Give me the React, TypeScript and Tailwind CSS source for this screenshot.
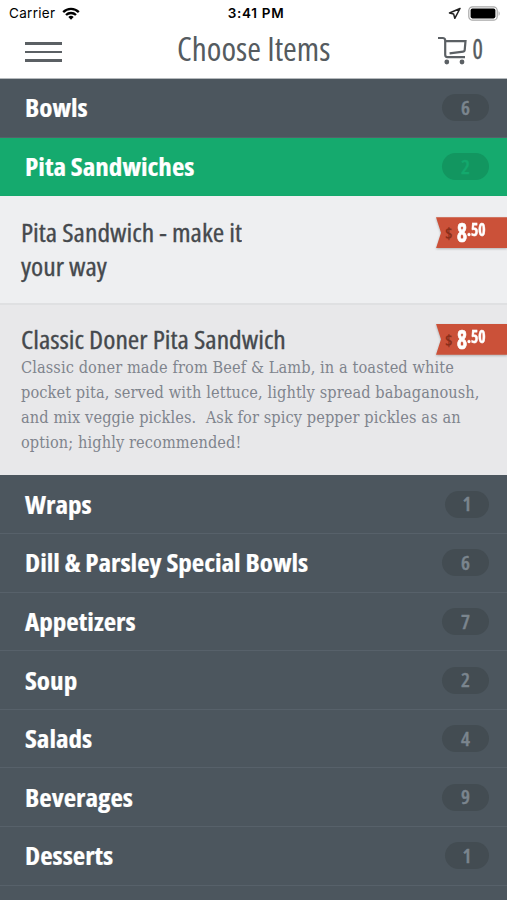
import clsx from 'clsx';

type Item = {
  name: string;
  price: string;
  cents: string;
  description?: string;
};

type Category = {
  name: string;
  count: number;
  items?: Item[];
};

const categories: Category[] = [
  { name: 'Bowls', count: 6 },
  {
    name: 'Pita Sandwiches',
    count: 2,
    items: [
      { name: 'Pita Sandwich - make it your way', price: '8', cents: '.50' },
      {
        name: 'Classic Doner Pita Sandwich',
        price: '8',
        cents: '.50',
        description:
          'Classic doner made from Beef & Lamb, in a toasted white pocket pita, served with lettuce, lightly spread babaganoush, and mix veggie pickles.\u00a0 Ask for spicy pepper pickles as an option; highly recommended!'
      }
    ]
  },
  { name: 'Wraps', count: 1 },
  { name: 'Dill & Parsley Special Bowls', count: 6 },
  { name: 'Appetizers', count: 7 },
  { name: 'Soup', count: 2 },
  { name: 'Salads', count: 4 },
  { name: 'Beverages', count: 9 },
  { name: 'Desserts', count: 1 }
];

function StatusBar() {
  return (
    <div className="grid h-[27px] grid-cols-3 items-center pl-[9px] pr-[6px] font-[Inter,sans-serif] text-[13.5px] leading-none text-black">
      <div className="flex items-center gap-[7px]">
        <span className="pt-px tracking-[0.3px]">Carrier</span>
        <svg width="18" height="13" viewBox="0 0 18 13" fill="none" stroke="#000" strokeWidth="2.3">
          <path d="M1.2 5.1a11 11 0 0 1 15.6 0" />
          <path d="M4 8a7.2 7.2 0 0 1 10 0" />
          <path d="M9 12.8 6.3 10a3.9 3.9 0 0 1 5.4 0z" fill="#000" stroke="none" />
        </svg>
      </div>
      <span className="pl-[2px] pt-px text-center font-semibold tracking-[0.7px]">3:41 PM</span>
      <div className="flex items-center justify-end gap-[7px]">
        <svg width="13" height="13" viewBox="0 0 13 13" fill="none" stroke="#222" strokeWidth="1.5" strokeLinejoin="round">
          <path d="M12 1.5 1.5 6l4.1.9L6.8 11.3z" />
        </svg>
        <svg width="33" height="15" viewBox="0 0 33 15">
          <rect x="0.8" y="0.8" width="28.4" height="13.4" rx="3.8" fill="#fff" stroke="#a8a8a8" strokeWidth="1.2" />
          <rect x="2.6" y="2.6" width="24.8" height="9.8" rx="1.8" fill="#000" />
          <path d="M30.6 5.2c1.4.6 1.4 4 0 4.6z" fill="#a8a8a8" />
        </svg>
      </div>
    </div>
  );
}

function Header() {
  return (
    <header className="flex h-[52px] items-start justify-between border-b border-[#b5b9bc] pl-[25px] pr-[24px] text-[#555b60]">
      <button className="mt-[15px] flex w-[37px] flex-col gap-[6px]" aria-label="Menu">
        <span className="h-[2.6px] w-full bg-[#5b6064]" />
        <span className="h-[2.6px] w-full bg-[#5b6064]" />
        <span className="h-[2.6px] w-full bg-[#5b6064]" />
      </button>
      <h1 className="ml-[7px] scale-x-[1.04] text-[32px] leading-[43px] font-normal whitespace-nowrap">Choose Items</h1>
      <div className="flex items-start gap-[5px]">
        <svg className="mt-[9px]" width="29" height="29" viewBox="0 0 29 29" fill="none" stroke="#5b6064" strokeWidth="2.2">
          <path d="M0 2h4.6q2.6 0 2.6 2.4v14.4q0 2.3 2.2 2.3H27" />
          <path d="M7.2 5.2h20.3l-.8 9q-.1 1.4-1.5 1.5L11.6 17.3" />
          <circle cx="8.8" cy="26" r="2.4" fill="#5b6064" stroke="none" />
          <circle cx="24" cy="26" r="2.4" fill="#5b6064" stroke="none" />
        </svg>
        <span className="scale-x-90 text-[27px] leading-[44px] font-medium [-webkit-text-stroke:0.4px_#555b60]">0</span>
      </div>
    </header>
  );
}

function PriceTag({ price, cents }: { price: string; cents: string }) {
  return (
    <div className="h-[31px] w-[71px] shrink-0 drop-shadow-[0_1px_1px_rgba(0,0,0,0.25)]">
      <div className="flex h-full items-start bg-[#cb5139] pl-[9px] leading-none font-bold [clip-path:polygon(0_0,100%_0,100%_100%,0_100%,5px_50%)]">
        <span className="mt-[8px] text-[16px] text-[#8a2f1b]">$</span>
        <span className="mt-[2px] ml-[4px] w-[10px] origin-left scale-x-[0.82] text-[26px] text-white [-webkit-text-stroke:0.7px_#fff]">
          {price}
        </span>
        <span className="mt-[4px] origin-left scale-x-[0.92] text-[17px] text-white [-webkit-text-stroke:0.4px_#fff]">
          {cents}
        </span>
      </div>
    </div>
  );
}

function MenuItem({ item, shaded }: { item: Item; shaded: boolean }) {
  return (
    <div
      className={clsx(
        'flex items-start pl-[21px]',
        shaded ? 'h-[170.6px] bg-[#e8e8ea] pt-[19px]' : 'h-[108.6px] border-b-2 border-[#dfe0e2] bg-[#eeeff1] pt-[21px]'
      )}
    >
      <div className="-mt-[2px] flex-1">
        <h2 className="w-[242px] origin-left scale-x-[1.105] text-[25px] leading-[34px] font-medium text-[#45494d] [-webkit-text-stroke:0.3px_#45494d]">
          {item.name}
        </h2>
        {item.description && (
          <p className="-mr-[60px] w-[475px] font-['DejaVu_Serif_Condensed','DejaVu_Serif',serif] text-[16.2px] leading-[24.9px] tracking-[0.1px] text-[#7f848d]">
            {item.description}
          </p>
        )}
      </div>
      <PriceTag price={item.price} cents={item.cents} />
    </div>
  );
}

function CategoryRow({ category }: { category: Category }) {
  const open = !!category.items;

  return (
    <div
      className={clsx(
        'flex h-[58.6px] items-center justify-between border-b pt-[0.4px] pl-[25.4px] pr-[18px]',
        open ? 'border-[#14a86c] bg-[#15aa6e]' : 'border-[#57616a] bg-[#4c565e]'
      )}
    >
      <span className="origin-left scale-x-[1.083] text-[25px] leading-none font-bold whitespace-nowrap text-white [-webkit-text-stroke:0.2px_#fff]">
        {category.name}
      </span>
      <span
        className={clsx(
          'flex h-[27px] items-center justify-center rounded-full text-[20px] font-semibold',
          category.count === 1 ? 'w-[44px]' : 'w-[47px]',
          open
            ? 'bg-[#129660] text-[#13a96d] [-webkit-text-stroke:0.4px_#13a96d]'
            : 'bg-[#434c52] text-[#7b858e] [-webkit-text-stroke:0.4px_#7b858e]'
        )}
      >
        {category.count}
      </span>
    </div>
  );
}

export default function App() {
  return (
    <div className="h-[900px] w-[507px] overflow-hidden bg-[#4c565e] font-['Open_Sans','Noto_Sans',sans-serif] [font-stretch:75%]">
      <div className="bg-white">
        <StatusBar />
        <Header />
      </div>
      {categories.map((category) => (
        <div key={category.name}>
          <CategoryRow category={category} />
          {category.items?.map((item, i) => (
            <MenuItem key={item.name} item={item} shaded={i % 2 === 1} />
          ))}
        </div>
      ))}
    </div>
  );
}
